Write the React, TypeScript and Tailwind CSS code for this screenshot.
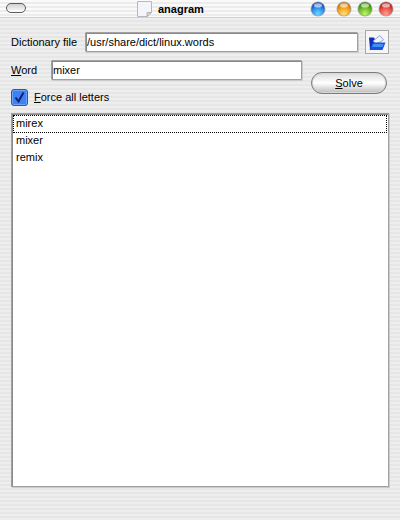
const stripes =
  "bg-[repeating-linear-gradient(180deg,#e6e6e6_0px,#e6e6e6_2px,#eeeeee_2px,#eeeeee_4px)]";

function Orb({ light, base, dark }: { light: string; base: string; dark: string }) {
  const id = `orb-${base.slice(1)}`;
  return (
    <svg width="16" height="16" viewBox="0 0 16 16" className="shrink-0">
      <defs>
        <radialGradient id={id} cx="50%" cy="85%" r="75%">
          <stop offset="0%" stopColor={light} />
          <stop offset="60%" stopColor={base} />
          <stop offset="100%" stopColor={dark} />
        </radialGradient>
      </defs>
      <circle cx="8" cy="8" r="7.5" fill="#8a8a8a" fillOpacity="0.7" />
      <circle cx="8" cy="8" r="6.7" fill={`url(#${id})`} />
      <ellipse cx="8" cy="4.4" rx="4" ry="2.1" fill="#ffffff" fillOpacity="0.6" />
    </svg>
  );
}

function PageIcon() {
  return (
    <svg width="17" height="18" viewBox="0 0 17 18" className="shrink-0">
      <path d="M1.5 1.5H15.5V12.5L11 16.5H1.5Z" fill="#f4f5fb" stroke="#b4b8c8" />
      <path d="M15.5 12.5H11V16.5Z" fill="#d8d8dc" stroke="#a0a0a0" strokeWidth="0.7" />
    </svg>
  );
}

function FolderIcon() {
  return (
    <svg width="18" height="17" viewBox="0 0 18 17">
      <path d="M1 3.5H6L7 5.5V15.5H2Z" fill="#0f2fb4" />
      <path d="M5 7L12 1.5L15.5 6L8 10Z" fill="#f2f4fc" stroke="#6f84c0" strokeWidth="0.7" />
      <path d="M4.5 8.5H17.5L14.5 16H1.5Z" fill="#1a50e0" />
      <path d="M5.5 10H15.5L14.4 13H4.2Z" fill="#3f92f4" />
    </svg>
  );
}

function Field({ value, className }: { value: string; className: string }) {
  return (
    <div
      className={`flex h-[20px] items-center rounded-[1px] border border-[#a0a0a0] bg-white pl-[1px] text-[11px] text-black shadow-[inset_1px_1px_0_#8a8a8a,1px_1px_0_#cccccc] ${className}`}
    >
      {value}
    </div>
  );
}

export default function App() {
  return (
    <div
      className={`flex h-[520px] w-[400px] flex-col overflow-hidden text-[11px] text-black ${stripes}`}
      style={{ fontFamily: '"Liberation Sans", Arial, sans-serif' }}
    >
      {/* Title bar */}
      <div className="relative flex h-[18px] items-center border-b border-[#cfcfcf] bg-[repeating-linear-gradient(180deg,#fafafa_0px,#fafafa_2px,#ececec_2px,#ececec_4px)] pl-[6px] pr-[6px]">
        <div className="mb-[1px] h-[10px] w-[20px] rounded-[5px] border-[1.5px] border-[#5a5a5a] bg-gradient-to-b from-[#d0d0d0] to-white" />
        <div className="ml-[110px] flex items-center gap-[5px]">
          <PageIcon />
          <span className="pt-[1px] text-[11px] font-bold">anagram</span>
        </div>
        <div className="ml-auto flex items-center gap-[5px]">
          <div className="mr-[5px]">
            <Orb light="#70d8ff" base="#2f8cf0" dark="#1448b8" />
          </div>
          <Orb light="#ffe07a" base="#f4a418" dark="#c87404" />
          <Orb light="#c4f070" base="#68c020" dark="#348410" />
          <Orb light="#ffa090" base="#ec5048" dark="#b02020" />
        </div>
      </div>

      {/* Form */}
      <div className="flex flex-col pl-[11px] pr-[11px] pt-[12px]">
        <div className="flex h-[24px] items-center">
          <span className="w-[74px]">Dictionary file</span>
          <Field value="/usr/share/dict/linux.words" className="w-[273px]" />
          <button className="ml-[7px] flex h-[24px] w-[24px] items-center justify-center border border-[#a8a8a8] bg-[#f6f6f6]">
            <FolderIcon />
          </button>
        </div>

        <div className="mt-[6px] flex items-start">
          <div className="flex flex-col">
            <div className="flex h-[20px] items-center">
              <span className="w-[40px]">
                <span className="underline">W</span>ord
              </span>
              <Field value="mixer" className="w-[251px]" />
            </div>
            <div className="mt-[9px] flex h-[17px] items-center">
              <span className="flex h-[17px] w-[17px] items-center justify-center rounded-[3px] border border-[#2c54b4] bg-[#3f80f4] shadow-[inset_0_0_0_1px_#6ea4f8]">
                <svg width="13" height="13" viewBox="0 0 13 13">
                  <path d="M2.5 6.5L5.5 10.5L10.5 1.5" fill="none" stroke="#0c2070" strokeWidth="2" />
                </svg>
              </span>
              <span className="ml-[6px]">
                <span className="underline">F</span>orce all letters
              </span>
            </div>
          </div>
          <button className="ml-[9px] mt-[12px] flex h-[22px] w-[76px] items-center justify-center rounded-[11px] border border-[#7c7c7c] bg-gradient-to-b from-[#dcdcdc] via-white to-[#bcbcbc] shadow-[inset_0_0_0_1px_#d8d8d8]">
            <span>
              <span className="underline">S</span>olve
            </span>
          </button>
        </div>

        {/* Result list */}
        <div className="mt-[7px] flex h-[374px] w-[378px] flex-col border border-[#a0a0a0] bg-white p-[1px] shadow-[inset_1px_1px_0_#8a8a8a,1px_1px_0_#cccccc]">
          <div className="flex h-[18px] items-center border border-dotted border-black pb-[2px] pl-[2px]">mirex</div>
          <div className="flex h-[17px] items-center pb-[2px] pl-[3px]">mixer</div>
          <div className="flex h-[17px] items-center pb-[2px] pl-[3px]">remix</div>
        </div>
      </div>
    </div>
  );
}
